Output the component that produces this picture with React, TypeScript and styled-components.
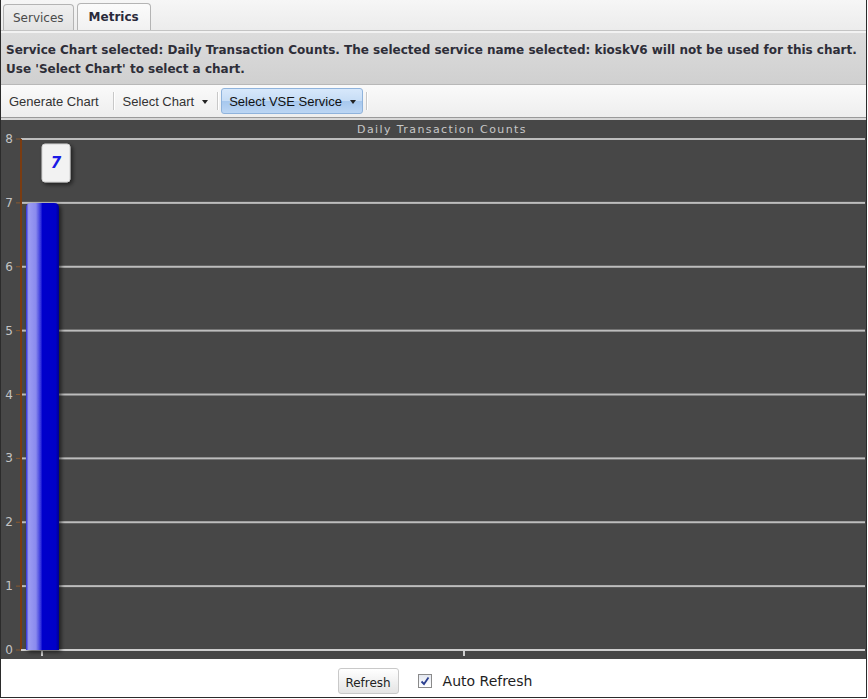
import React from "react";
import styled, { createGlobalStyle } from "styled-components";

const Global = createGlobalStyle`
  html, body { margin: 0; padding: 0; background: #fff; }
  body { width: 868px; height: 699px; overflow: hidden; }
`;

const Frame = styled.div`
  width: 867px;
  height: 698px;
  box-sizing: border-box;
  border-left: 1px solid #2b2b2b;
  border-right: 1px solid #2b2b2b;
  border-bottom: 1px solid #2b2b2b;
  display: flex;
  flex-direction: column;
  background: #fff;
  font-family: "DejaVu Sans", Verdana, sans-serif;
`;

const TabBar = styled.div`
  height: 31px;
  box-sizing: border-box;
  display: flex;
  align-items: flex-end;
  gap: 3px;
  padding-left: 2px;
  background: linear-gradient(#f6f6f6, #ececec);
  border-bottom: 1px solid #c4c4c4;
`;

const Tab = styled.div<{ $active?: boolean }>`
  height: 26px;
  box-sizing: border-box;
  padding: 0 9px;
  display: flex;
  align-items: center;
  border: 1px solid #b4b4b4;
  border-bottom: none;
  border-radius: 4px 4px 0 0;
  font-size: 12px;
  font-weight: ${(p) => (p.$active ? 700 : 400)};
  color: ${(p) => (p.$active ? "#2a2a3a" : "#4a4a4a")};
  background: ${(p) =>
    p.$active ? "linear-gradient(#fbfbfb, #f1f1f1)" : "linear-gradient(#f0f0f0, #e2e2e2)"};
  ${(p) => (p.$active ? "padding: 0 11px; height: 27px;" : "")}
`;

const Message = styled.div`
  height: 54px;
  box-sizing: border-box;
  padding: 8px 5px 0 5px;
  border-top: 2px solid #f2f2f2;
  border-bottom: 1px solid #b8b8b8;
  background: linear-gradient(#dcdcdc, #d0d0d0);
  color: #2e2e38;
  font-size: 12px;
  font-weight: 700;
  line-height: 19px;
  white-space: nowrap;
`;

const Toolbar = styled.div`
  height: 33px;
  box-sizing: border-box;
  display: flex;
  align-items: center;
  padding-left: 2px;
  background: linear-gradient(#fafafa, #eeeeee);
  border-bottom: 1px solid #9a9a9a;
  font-family: "Liberation Sans", Arial, sans-serif;
  font-size: 13px;
  color: #333;
`;

const ToolButton = styled.div<{ $pressed?: boolean; $padRight?: number }>`
  height: 26px;
  box-sizing: border-box;
  display: flex;
  align-items: center;
  padding: 0 ${(p) => p.$padRight ?? 7}px 0 ${(p) => (p.$pressed ? 7 : 5)}px;
  border-radius: 3px;
  border: 1px solid ${(p) => (p.$pressed ? "#8fb3dc" : "transparent")};
  background: ${(p) =>
    p.$pressed
      ? "linear-gradient(#d7e8fb 0%, #c7ddf6 48%, #a7c8ee 52%, #bcd6f4 100%)"
      : "transparent"};
  color: ${(p) => (p.$pressed ? "#111" : "#333")};
`;

const Arrow = styled.span`
  display: inline-block;
  width: 0;
  height: 0;
  margin-left: 8px;
  margin-top: 1px;
  border-left: 3px solid transparent;
  border-right: 3px solid transparent;
  border-top: 4px solid #222;
`;

const Sep = styled.div`
  width: 1px;
  height: 18px;
  margin: 0 3px;
  background: #c8c8c8;
  box-shadow: 1px 0 0 #fff;
`;

const ChartArea = styled.div`
  height: 541px;
  background: #474747;
`;

const Footer = styled.div`
  flex: 1;
  display: flex;
  align-items: center;
  justify-content: center;
  gap: 19px;
  padding-left: 3px;
  padding-top: 6px;
`;

const RefreshButton = styled.div`
  width: 61px;
  height: 26px;
  box-sizing: border-box;
  border: 1px solid #c9c9c9;
  border-radius: 3px;
  background: linear-gradient(#ffffff, #e4e4e4);
  display: flex;
  align-items: center;
  justify-content: center;
  padding-top: 3px;
  font-size: 12px;
  color: #222;
`;

const CheckLabel = styled.label`
  display: flex;
  align-items: center;
  gap: 11px;
  font-size: 14px;
  color: #1e1e1e;
`;

const Box = styled.span`
  width: 14px;
  height: 14px;
  box-sizing: border-box;
  border: 1px solid #8a8a8a;
  background: linear-gradient(#e4e8f0, #ffffff);
  display: flex;
  align-items: center;
  justify-content: center;
`;

const yTop = 21;
const yZero = 532;
const step = (yZero - yTop) / 8;

function Chart() {
  const levels = [0, 1, 2, 3, 4, 5, 6, 7, 8];
  const barTop = yZero - 7 * step;
  return (
    <svg width="865" height="541" viewBox="0 0 865 541" style={{ display: "block" }}>
      <defs>
        <linearGradient id="barg" x1="0" x2="1" y1="0" y2="0">
          <stop offset="0" stopColor="#2a2ad6" />
          <stop offset="0.08" stopColor="#9c9cf2" />
          <stop offset="0.3" stopColor="#8a8aee" />
          <stop offset="0.45" stopColor="#3030dc" />
          <stop offset="0.5" stopColor="#0000cc" />
          <stop offset="0.9" stopColor="#0000c8" />
          <stop offset="1" stopColor="#000090" />
        </linearGradient>
        <filter id="sh" x="-30%" y="-30%" width="160%" height="160%">
          <feGaussianBlur in="SourceAlpha" stdDeviation="2" />
          <feOffset dx="2" dy="2" />
          <feComponentTransfer>
            <feFuncA type="linear" slope="0.6" />
          </feComponentTransfer>
          <feMerge>
            <feMergeNode />
            <feMergeNode in="SourceGraphic" />
          </feMerge>
        </filter>
      </defs>
      <rect x="0" y="0" width="865" height="2" fill="#d8d8d8" />
      <text
        x="441"
        y="15"
        textAnchor="middle"
        fontFamily="DejaVu Sans, Verdana, sans-serif"
        fontSize="11"
        letterSpacing="1.4"
        fill="#c8c8c8"
      >
        Daily Transaction Counts
      </text>
      {levels.map((v) => {
        const y = yZero - v * step;
        return (
          <g key={v}>
            {v > 0 && <rect x="20" y={y - 1} width="844" height="2" fill="#bdbdbd" />}
            <rect x="15" y={y - 0.5} width="5" height="1" fill="#8a5a30" />
            <text
              x="12"
              y={y + 4}
              textAnchor="end"
              fontFamily="DejaVu Sans, Verdana, sans-serif"
              fontSize="12"
              fill="#c4c4c4"
            >
              {v}
            </text>
          </g>
        );
      })}
      <rect x="19" y={yTop} width="2" height={yZero - yTop} fill="#7a3c12" />
      <rect x="20" y={yZero - 1} width="844" height="2" fill="#cfcfcf" />
      <rect x="40" y={yZero} width="2" height="6" fill="#cfcfcf" />
      <rect x="462" y={yZero} width="2" height="6" fill="#cfcfcf" />
      <path
        d={`M25 ${yZero} L25 ${barTop + 5} Q25 ${barTop} 30 ${barTop} L53 ${barTop} Q58 ${barTop} 58 ${barTop + 5} L58 ${yZero} Z`}
        fill="url(#barg)"
        filter="url(#sh)"
      />
      <g filter="url(#sh)">
        <rect x="41" y="26" width="28" height="38" rx="3" fill="#f2f2f2" stroke="#d0d0d0" />
      </g>
      <text
        x="55"
        y="50"
        textAnchor="middle"
        fontFamily="DejaVu Sans, Verdana, sans-serif"
        fontSize="15"
        fontWeight="700"
        fontStyle="italic"
        fill="#1a1ae6"
      >
        7
      </text>
    </svg>
  );
}

export default function App() {
  return (
    <>
      <Global />
      <Frame>
        <TabBar>
          <Tab>Services</Tab>
          <Tab $active>Metrics</Tab>
        </TabBar>
        <Message>
          <div>
            Service Chart selected: Daily Transaction Counts. The selected service name selected:
            kioskV6 will not be used for this chart.
          </div>
          <div>Use 'Select Chart' to select a chart.</div>
        </Message>
        <Toolbar>
          <ToolButton $padRight={10}>Generate Chart</ToolButton>
          <Sep />
          <ToolButton $padRight={5}>
            Select Chart
            <Arrow />
          </ToolButton>
          <Sep />
          <ToolButton $pressed $padRight={6}>
            Select VSE Service
            <Arrow />
          </ToolButton>
          <Sep />
        </Toolbar>
        <ChartArea>
          <Chart />
        </ChartArea>
        <Footer>
          <RefreshButton>Refresh</RefreshButton>
          <CheckLabel>
            <Box>
              <svg width="10" height="10" viewBox="0 0 10 10">
                <path d="M1.5 5.5 L4 8 L8.5 1.5" fill="none" stroke="#2b3f8f" strokeWidth="1.8" />
              </svg>
            </Box>
            Auto Refresh
          </CheckLabel>
        </Footer>
      </Frame>
    </>
  );
}
